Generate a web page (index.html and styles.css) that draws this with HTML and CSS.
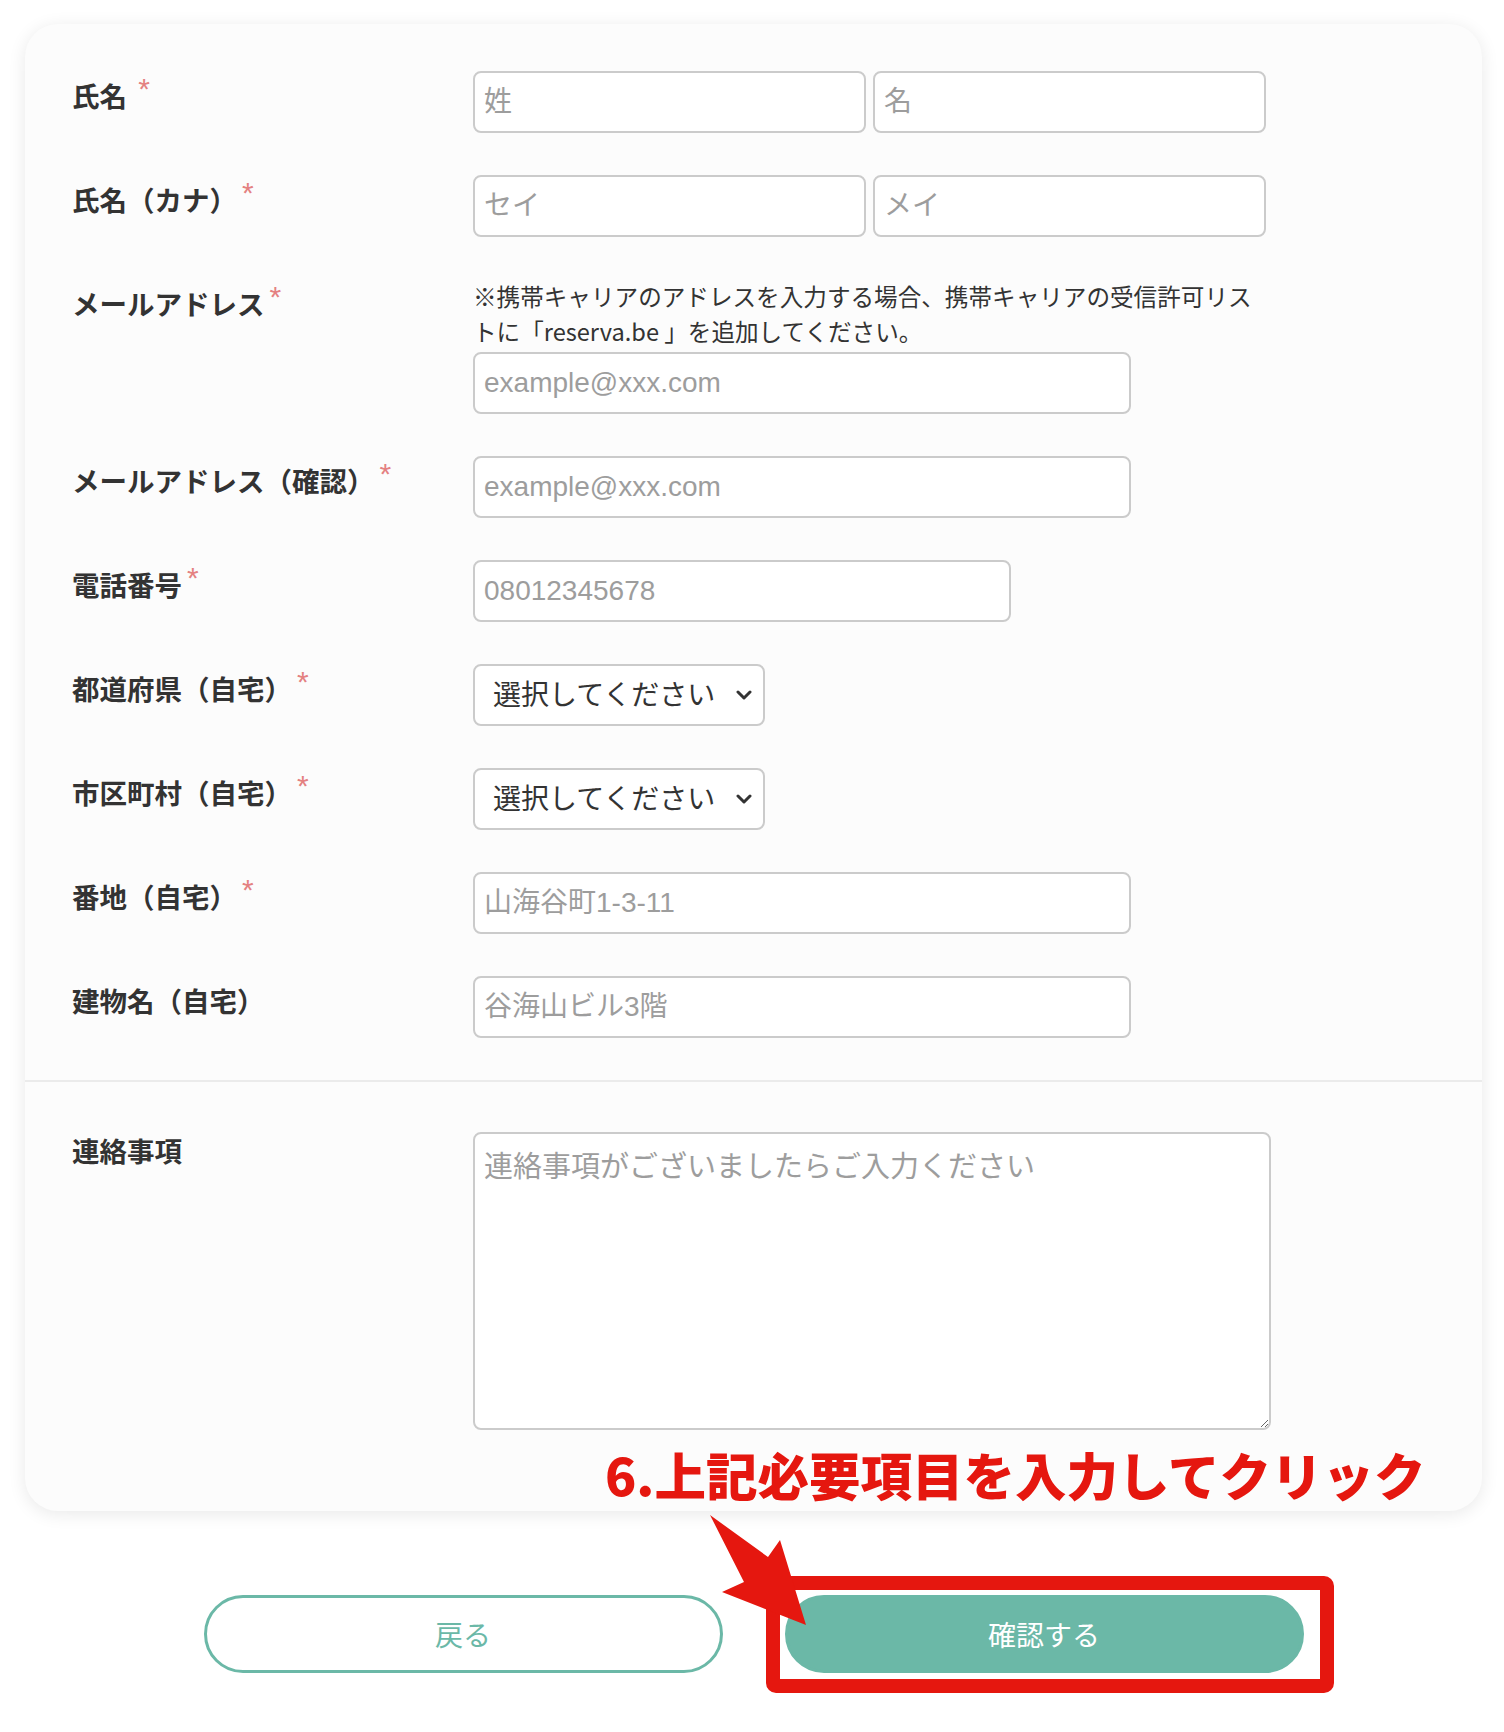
FILE: index.html
```html
<!DOCTYPE html>
<html lang="ja">

<head>
	<meta charset="utf-8">
	<title>お客様情報の入力</title>
	<link rel="stylesheet" href="styles.css">
</head>

<body>
	<div class="page">
		<form class="card" id="customerForm">
			<div class="section">
				<div class="row">
					<div class="label">氏名 <span class="req">*</span></div>
					<div class="pair">
						<input type="text" class="input" name="lastName" placeholder="姓" />
						<input type="text" class="input" name="firstName" placeholder="名" />
					</div>
				</div>

				<div class="row">
					<div class="label">氏名（カナ）<span class="req">*</span></div>
					<div class="pair">
						<input type="text" class="input" name="lastKana" placeholder="セイ" />
						<input type="text" class="input" name="firstKana" placeholder="メイ" />
					</div>
				</div>

				<div class="row">
					<div class="label">メールアドレス<span class="req">*</span></div>
					<div class="field">
						<p class="note">※携帯キャリアのアドレスを入力する場合、携帯キャリアの受信許可リストに「reserva.be 」を追加してください。</p>
						<input type="text" class="input input-wide" name="email" placeholder="example@xxx.com" />
					</div>
				</div>

				<div class="row">
					<div class="label">メールアドレス（確認）<span class="req">*</span></div>
					<div class="field">
						<input type="text" class="input input-wide" name="emailConfirm" placeholder="example@xxx.com" />
					</div>
				</div>

				<div class="row">
					<div class="label">電話番号<span class="req">*</span></div>
					<div class="field">
						<input type="text" class="input input-tel" name="tel" placeholder="08012345678" />
					</div>
				</div>

				<div class="row">
					<div class="label">都道府県（自宅）<span class="req">*</span></div>
					<div class="field">
						<div class="select-wrap">
							<select class="select" name="prefecture">
								<option>選択してください</option>
							</select>
							<svg class="chevron" width="16" height="10" viewBox="0 0 16 10">
								<path d="M2 2 L8 8 L14 2" fill="none" stroke="#333" stroke-width="3" stroke-linecap="round" stroke-linejoin="round" />
							</svg>
						</div>
					</div>
				</div>

				<div class="row">
					<div class="label">市区町村（自宅）<span class="req">*</span></div>
					<div class="field">
						<div class="select-wrap">
							<select class="select" name="city">
								<option>選択してください</option>
							</select>
							<svg class="chevron" width="16" height="10" viewBox="0 0 16 10">
								<path d="M2 2 L8 8 L14 2" fill="none" stroke="#333" stroke-width="3" stroke-linecap="round" stroke-linejoin="round" />
							</svg>
						</div>
					</div>
				</div>

				<div class="row">
					<div class="label">番地（自宅）<span class="req">*</span></div>
					<div class="field">
						<input type="text" class="input input-wide" name="address" placeholder="山海谷町1-3-11" />
					</div>
				</div>

				<div class="row">
					<div class="label">建物名（自宅）</div>
					<div class="field">
						<input type="text" class="input input-wide" name="building" placeholder="谷海山ビル3階" />
					</div>
				</div>
			</div>

			<div class="section section-notes">
				<div class="row">
					<div class="label label-notes">連絡事項</div>
					<div class="field">
						<textarea class="textarea" name="notes" placeholder="連絡事項がございましたらご入力ください"></textarea>
					</div>
				</div>
			</div>
		</form>

		<div class="buttons">
			<button type="button" class="btn btn-back">戻る</button>
			<button type="submit" form="customerForm" class="btn btn-confirm">確認する</button>
		</div>

		<!-- annotation overlay -->
		<p class="callout">6.上記必要項目を入力してクリック</p>
		<div class="highlight"></div>
		<svg class="arrow" width="120" height="130" viewBox="0 0 120 130">
			<polygon points="10,10 68,52 80,35 106,120 22,87 44,77" fill="#e5170f" />
		</svg>
	</div>
</body>

</html>
```

FILE: styles.css
```css
* {
	box-sizing: border-box;
	margin: 0;
	padding: 0;
}

body {
	background: #fff;
	font-family: "Noto Sans CJK JP", sans-serif;
	color: #333;
}

.page {
	position: relative;
	width: 1504px;
	height: 1732px;
	padding: 24px 22px 0 25px;
}

.card {
	background: #fcfcfc;
	border-radius: 33px;
	box-shadow: 0 3px 18px rgba(0, 0, 0, 0.09);
}

.section {
	display: flex;
	flex-direction: column;
	gap: 42px;
	padding: 47px 0 42px 47px;
}

.section-notes {
	border-top: 2px solid #ebebeb;
	padding-top: 50px;
	padding-bottom: 81px;
}

.row {
	display: grid;
	grid-template-columns: 401px 798px;
	align-items: start;
}

.label {
	font-size: 27.5px;
	font-weight: bold;
	line-height: 34px;
	padding-top: 7px;
	color: #333;
}

.label-notes {
	padding-top: 1px;
}

.req {
	font-family: "Liberation Sans", sans-serif;
	font-size: 30px;
	font-weight: normal;
	color: #e48181;
	margin-left: 5px;
	vertical-align: 8px;
	line-height: 0;
}

.pair {
	display: flex;
	gap: 7px;
}

.pair .input {
	width: 393px;
}

.note {
	font-size: 23.6px;
	line-height: 35px;
	color: #333;
	margin-bottom: 3px;
}

.input,
.select,
.textarea {
	display: block;
	height: 62px;
	border: 2px solid #cbcbcb;
	border-radius: 8px;
	background: #fff;
	font-family: "Liberation Sans", "Noto Sans CJK JP", sans-serif;
	font-size: 28px;
	color: #333;
	padding: 0 9px;
	outline: none;
}

.input::placeholder,
.textarea::placeholder {
	color: #9d9d9d;
}

.input-wide {
	width: 658px;
}

.input-tel {
	width: 538px;
}

.select-wrap {
	position: relative;
	width: 292px;
}

.select {
	width: 292px;
	appearance: none;
	-webkit-appearance: none;
	padding-left: 18px;
}

.chevron {
	position: absolute;
	right: 13px;
	top: 26px;
}

.textarea {
	width: 798px;
	height: 298px;
	padding-top: 14px;
	font-size: 29px;
	line-height: 38px;
	resize: vertical;
}

.buttons {
	display: flex;
	justify-content: center;
	gap: 62px;
	margin-top: 84px;
}

.btn {
	width: 519px;
	height: 78px;
	border-radius: 39px;
	border: 3px solid #6bb8a7;
	font-family: "Noto Sans CJK JP", sans-serif;
	font-size: 28px;
	cursor: pointer;
}

.btn-back {
	background: #fff;
	color: #6bb8a7;
}

.btn-confirm {
	background: #6bb8a7;
	color: #fff;
}

.callout {
	position: absolute;
	left: 605px;
	top: 1448px;
	font-size: 51.5px;
	font-weight: 900;
	line-height: 1;
	color: #e5170f;
	white-space: nowrap;
}

.highlight {
	position: absolute;
	left: 766px;
	top: 1576px;
	width: 568px;
	height: 117px;
	border: 14px solid #e5170f;
	border-radius: 10px;
}

.arrow {
	position: absolute;
	left: 700px;
	top: 1505px;
}
```
